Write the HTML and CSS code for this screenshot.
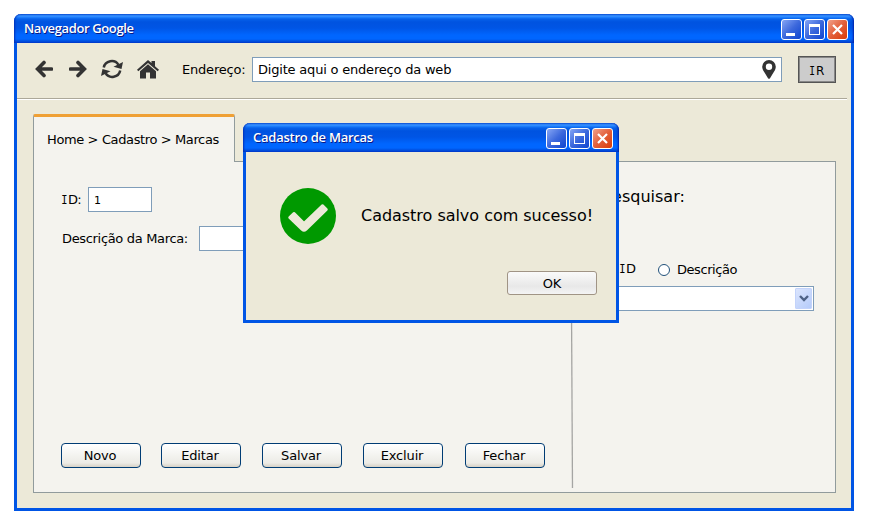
FILE: index.html
```html
<!DOCTYPE html>
<html lang="pt-BR">
<head>
<meta charset="utf-8">
<title>Navegador Google</title>
<link rel="stylesheet" href="styles.css">
</head>
<body>
<svg class="defs" width="0" height="0" aria-hidden="true">
  <symbol id="min" viewBox="0 0 21 21"><path fill="#fff" d="M5 14h9v3H5z"/></symbol>
  <symbol id="max" viewBox="0 0 21 21"><path fill="#fff" fill-rule="evenodd" d="M5 5h11v11H5zM6 8v7h9V8z"/></symbol>
  <symbol id="close" viewBox="0 0 21 21"><path stroke="#fff" stroke-width="2.2" d="M6 6l9 9M15 6l-9 9"/></symbol>
</svg>
<main class="window browser">
  <header class="titlebar">
    <span class="title title-main">Navegador Google</span>
    <span class="ctl"><svg><use href="#min"/></svg></span>
    <span class="ctl"><svg><use href="#max"/></svg></span>
    <span class="ctl ctl-close"><svg><use href="#close"/></svg></span>
  </header>
  <div class="toolbar">
    <svg class="ico" width="18" height="18" viewBox="0 0 18 18"><path d="M9 2.500L2.600 9l6.400 6.500M3 9h13.500" fill="none" stroke="#333" stroke-width="3.600" stroke-linecap="round"/></svg>
    <svg class="ico fwd" width="18" height="18" viewBox="0 0 18 18"><path d="M9 2.500L15.400 9L9 15.500M15 9H1.500" fill="none" stroke="#333" stroke-width="3.600" stroke-linecap="round"/></svg>
    <svg class="ico refresh" width="22" height="20" viewBox="0 0 22 20"><g fill="none" stroke="#333" stroke-width="2.500"><path d="M2.800 8.500A8 7.700 0 0 1 17.500 5.800"/><path d="M19.200 11.500A8 7.700 0 0 1 4.500 14.200"/></g><path fill="#333" d="M22 3l-1.500 7L12.500 7.800zM0 17l1.500-7L9.500 12.200z"/></svg>
    <svg class="ico home" width="22" height="19" viewBox="0 0 22 19"><path fill="#333" d="M11 0l3.500 3.100V1H18v5.200l4 3.600-1.300 1.500L11 2.900 1.300 11.300 0 9.800zM11 4.200l8 7V18.500h-6V12.500H9v6H3v-7.300z"/></svg>
    <label class="addr-label">Endereço:</label>
    <div class="field address"><span>Digite aqui o endereço da web</span>
      <svg width="14" height="19" viewBox="0 0 14 19"><path fill="#333" fill-rule="evenodd" d="M7 0a6.800 6.800 0 0 1 6.800 6.800C13.800 9 12.500 11 11.500 12.600L8 18.300Q7 19.300 6 18.300L2.500 12.600C1.500 11 .2 9 .2 6.800A6.800 6.800 0 0 1 7 0zM7 3.600a3.200 3.200 0 1 0 0 6.400 3.200 3.200 0 0 0 0-6.400z"/></svg>
    </div>
    <button class="go"><span class="slab">I</span>R</button>
  </div>
  <div class="rule"></div>
  <div class="content">
    <nav class="tab">Home &gt; Cadastro &gt; Marcas</nav>
    <section class="panel">
      <div class="form">
        <div class="row id-row"><label><span class="slab">I</span>D:</label><div class="field id-field">1</div></div>
        <div class="row desc-row"><label>Descrição da Marca:</label><div class="field desc-field"></div></div>
        <div class="actions">
          <button>Novo</button><button>Editar</button><button>Salvar</button><button>Excluir</button><button>Fechar</button>
        </div>
      </div>
      <svg class="divider" width="4" height="326" viewBox="0 0 4 326"><path d="M0.700 0L2.500 326" stroke="#a5a5a3" stroke-width="1.300"/></svg>
      <aside class="search">
        <h2>Pesquisar:</h2>
        <div class="radios"><span class="radio"></span><span class="r-id"><span class="slab">I</span>D</span><span class="radio"></span><span class="r-desc">Descrição</span></div>
        <div class="field select"><span class="drop"><svg width="10" height="7" viewBox="0 0 10 7"><path d="M1 1l4 4 4-4" fill="none" stroke="#4d6185" stroke-width="2.400"/></svg></span></div>
      </aside>
    </section>
  </div>
</main>
<div class="window dialog">
  <header class="titlebar">
    <span class="title title-dlg">Cadastro de Marcas</span>
    <span class="ctl"><svg><use href="#min"/></svg></span>
    <span class="ctl"><svg><use href="#max"/></svg></span>
    <span class="ctl ctl-close"><svg><use href="#close"/></svg></span>
  </header>
  <div class="message">
    <svg width="56" height="56" viewBox="0 0 56 56"><circle cx="28" cy="28" r="28" fill="#090"/><path d="M9.500 29.500L14 25.200L24 35.200L42.500 17.500L46.500 21.500L26 41.500Q24 43.200 22 41.500Z" fill="#ece9d8" stroke="#ece9d8" stroke-width="2.500" stroke-linejoin="round"/></svg>
    <p>Cadastro salvo com sucesso!</p>
  </div>
  <button class="ok">OK</button>
</div>
</body>
</html>
```
FILE: styles.css
```css
* { box-sizing: border-box; }
body {
  margin: 0;
  padding: 14px;
  background: #fff;
  color: #000;
  font: 13px/16px "DejaVu Sans", Verdana, sans-serif;
  white-space: nowrap;
}
.defs { position: absolute; }
svg { display: block; flex: none; }
button { font: inherit; color: #000; padding: 0; letter-spacing: -0.15px; }
.slab {
  display: inline-block;
  width: 6px;
  font-family: "DejaVu Sans Mono", monospace;
  transform: scaleX(0.8);
  transform-origin: 0 0;
  text-indent: -1px;
}
.window {
  background: #ece9d8;
  border: 3px solid #0055e5;
  border-top: 0;
  border-radius: 7px 7px 0 0;
}
.browser { width: 840px; height: 497px; }
.titlebar {
  height: 29px;
  margin: 0 -3px;
  padding: 5px 6px 0 10px;
  display: flex;
  gap: 2px;
  border-radius: 7px 7px 0 0;
  background: linear-gradient(#0b55d8 0, #3a93ff 2px, #2284ff 3px, #0661ea 5px, #0053e0 8px, #0055e5 14px, #0066ff 21px, #0066ff 25px, #0050e0 27px, #003ccb 29px);
  box-shadow: inset 2px 0 2px -1px #0030b8, inset -2px 0 2px -1px #0020a8;
}
.title {
  flex: 1;
  color: #fff;
  font: 600 13px/19px "Open Sans", "Trebuchet MS", sans-serif;
  text-shadow: 1px 1px 0 #0a1883;
}
.title-main { letter-spacing: -0.37px; }
.title-dlg { letter-spacing: -0.24px; }
.ctl {
  width: 21px;
  height: 21px;
  border: 1px solid #fff;
  border-radius: 3px;
  background: linear-gradient(135deg, #86a6f5, #3c68dc 50%, #0f45d0);
}
.ctl svg { width: 21px; height: 21px; margin: -1px; }
.ctl-close { background: linear-gradient(135deg, #f0a08a, #e35f3a 50%, #d83c08); }

.toolbar { height: 55px; display: flex; padding-left: 18px; }
.ico { margin-top: 17px; }
.fwd { margin-left: 16px; }
.refresh { margin: 16px 0 0 14px; }
.home { margin-left: 14px; }
.addr-label { width: 70px; margin: 19px 0 0 23px; letter-spacing: -0.2px; }
.field { background: #fff; border: 1px solid #7f9db9; height: 25px; }
.address { width: 530px; margin-top: 14px; padding: 4px 5px 0; display: flex; justify-content: space-between; letter-spacing: -0.2px; }
.address svg { margin-top: -2px; }
.go { width: 38px; height: 27px; margin: 13px 0 0 16px; padding-top: 2px; border: 1px solid #555; background: #ccc; font-size: 12px; letter-spacing: -0.5px; box-shadow: inset 0 0 0 1px #888; }
.rule { height: 2px; width: 830px; background: #fff; border-top: 1px solid #aca899; }

.content { padding: 14px 0 0 16px; }
.tab {
  position: relative;
  width: 202px;
  height: 48px;
  padding: 15px 0 0 13px;
  background: #f4f3ee;
  border: 1px solid #919b9c;
  border-top: 3px solid #efa034;
  border-bottom: 0;
  border-radius: 2px 2px 0 0;
  letter-spacing: -0.38px;
}
.panel {
  width: 803px;
  height: 332px;
  margin-top: -1px;
  background: #f4f3ee;
  border: 1px solid #919b9c;
  display: flex;
}
.form { width: 536px; padding: 25px 0 0 27px; }
.row { display: flex; align-items: center; }
.id-row { margin-left: 1px; gap: 7px; }
.id-field { width: 64px; padding: 5px 5px; font-size: 11px; }
.id-row label { width: 19px; letter-spacing: -0.8px; }
.desc-row { margin: 14px 0 0 1px; }
.desc-row label { width: 137px; letter-spacing: -0.33px; }
.desc-field { width: 250px; }
.actions { display: flex; gap: 21px; margin-top: 192px; }
.actions button {
  width: 80px;
  flex: none;
  height: 25px;
  padding-right: 2px;
  border: 1px solid #003c74;
  border-radius: 4px;
  background: linear-gradient(#fff, #f3f3ef 50%, #ecebe6 82%, #d6d0c5);
}
.actions button:not(:first-child):not(:last-child) { position: relative; left: -1px; }
.search { padding: 25px 0 0 20px; }
h2 { margin: 0 0 0 9px; font: 16px/20px "DejaVu Sans", Verdana, sans-serif; }
.radios { display: flex; align-items: center; margin-top: 55px; height: 16px; }
.radio { width: 12px; height: 12px; border: 1px solid #21517a; border-radius: 50%; background: #fff; }
.r-id { width: 38px; margin: -2px 0 0 14px; letter-spacing: -0.8px; }
.r-desc { margin-left: 7px; letter-spacing: -0.45px; }
.select { width: 220px; margin-top: 8px; padding: 1px; display: flex; justify-content: flex-end; }
.drop { width: 17px; height: 21px; display: grid; place-items: center; background: linear-gradient(135deg, #dbe5fd, #b5cbfa); border: 1px solid #c3d3fb; border-radius: 1px; }

.dialog { position: absolute; left: 243px; top: 123px; width: 376px; height: 200px; }
.message { display: flex; padding: 36px 0 0 34px; gap: 25px; }
.message p { margin: 18px 0 0; font-size: 16px; line-height: 20px; letter-spacing: -0.03px; }
.ok { display: block; width: 90px; height: 24px; margin: 27px 0 0 261px; padding-top: 1px; border: 1px solid #a09485; border-radius: 3px; background: linear-gradient(#fafafa, #e8e8e8 65%, #f4f4f4); }
```
